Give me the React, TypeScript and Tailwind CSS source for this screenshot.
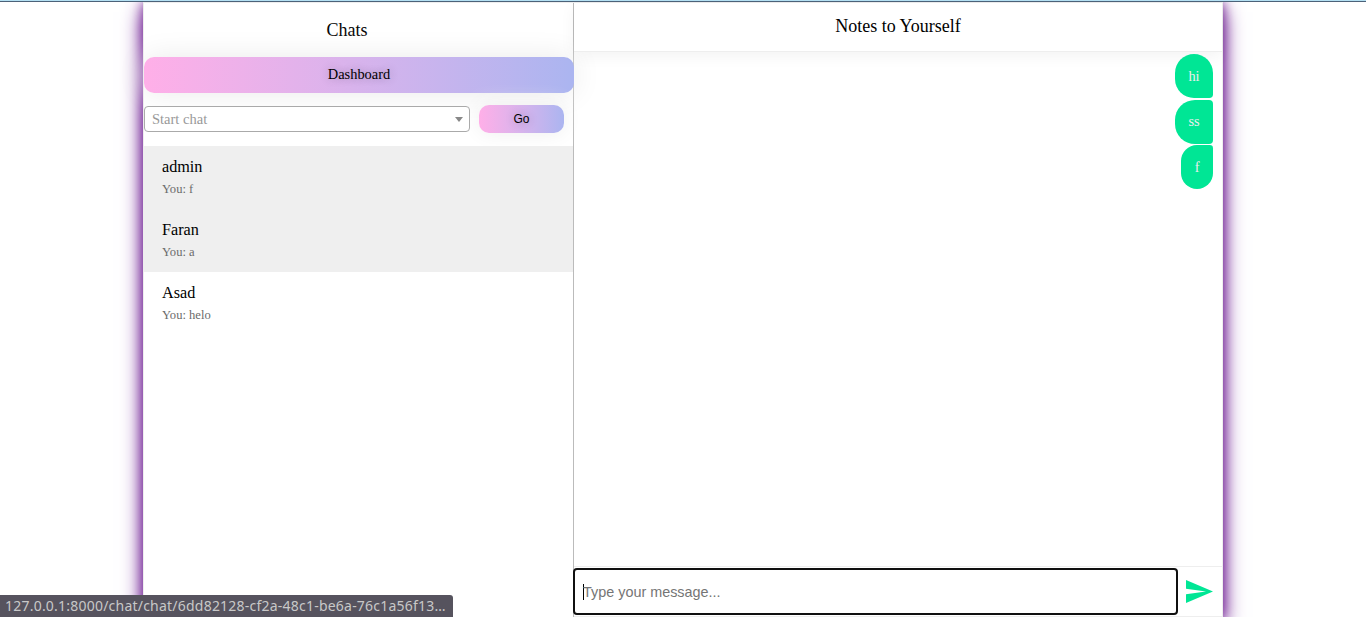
const chats = [
  { name: "admin", last: "You: f", unread: true },
  { name: "Faran", last: "You: a", unread: true },
  { name: "Asad", last: "You: helo", unread: false },
];

const messages = [
  { text: "hi", shape: "rounded-[20px] rounded-br-[4px]" },
  { text: "ss", shape: "rounded-[20px] rounded-r-[4px]" },
  { text: "f", shape: "rounded-[20px] rounded-tr-[4px]" },
];

function Sidebar() {
  return (
    <aside className="flex w-[430px] shrink-0 flex-col border-r border-[#bbbbbb]">
      <h2 className="h-[54px] pt-[14px] pr-[23px] text-center text-[18px] leading-[26px]">Chats</h2>
      <button className="h-9 w-[430px] shrink-0 rounded-[10px] bg-linear-to-r from-[#ffafe8] to-[#abb5f0] pb-[2px] text-[14.4px] leading-5 shadow-[0_0_30px_#eaeaea] [text-shadow:0_0_10px_#0000004d]">
        Dashboard
      </button>
      <div className="flex h-[53px] shrink-0 items-start pt-3">
        <div className="relative mt-px flex h-[26px] w-[326px] items-center justify-between rounded-[4px] border border-[#aaaaaa] bg-white pr-[6px] pl-[7px] text-[14.5px] text-[#999999]">
          <span className="pt-0.5">Start chat</span>
          <span className="border-x-[4px] border-t-[5px] border-x-transparent border-t-[#888888]" />
        </div>
        <button className="ml-[9px] h-7 w-[85px] rounded-[10px] bg-linear-to-r from-[#ffafe8] to-[#abb5f0] font-['Liberation_Sans',sans-serif] text-[12px] shadow-[0_0_20px_#eeeeee] [text-shadow:0_0_10px_#0000004d]">
          Go
        </button>
      </div>
      <ul className="relative">
        {chats.map((chat) => (
          <li key={chat.name} className={`h-[63px] pt-[10px] pl-[18px] ${chat.unread ? "bg-[#efefef]" : "bg-white"}`}>
            <div className="text-[16.2px] leading-[22px]">{chat.name}</div>
            <div className="text-[12.6px] leading-[22px] text-[#6b6b6b]">{chat.last}</div>
          </li>
        ))}
      </ul>
    </aside>
  );
}

function Conversation() {
  return (
    <section className="flex min-w-0 flex-1 flex-col">
      <h2 className="h-[49px] shrink-0 border-b border-[#eeeeee] bg-white pt-[10px] text-center text-[18px] leading-[26px] shadow-[0_4px_16px_#0000000d]">
        Notes to Yourself
      </h2>
      <div className="flex flex-1 flex-col items-end gap-[1.5px] pt-[2px] pr-[9px]">
        {messages.map((message) => (
          <div key={message.text} className={`h-11 bg-[#00e695] px-[13.4px] pt-[0.8px] text-[14.4px] leading-[43px] text-[#eeeeee] ${message.shape}`}>
            {message.text}
          </div>
        ))}
      </div>
      <div className="flex h-[51px] shrink-0 border-y border-[#eeeeee]">
        <div className="relative -ml-px mt-px flex h-[47px] w-[605px] items-center rounded-[4px] border-2 border-[#101010] bg-white pl-2 font-['Liberation_Sans',sans-serif] text-[14.4px] text-[#757575]">
          <span className="h-4 w-px bg-black" />
          <span className="-ml-px pt-0.5">Type your message...</span>
        </div>
        <svg className="mt-[13px] ml-2 h-[23px] w-[27px]" viewBox="0 0 27 23" fill="#00e695">
          <path d="M0 0 27 11.5 0 23V14.2L20 11.5 0 8.8Z" />
        </svg>
      </div>
    </section>
  );
}

export default function App() {
  return (
    <main className="relative flex h-[617px] flex-col overflow-hidden bg-white font-['Liberation_Serif',serif] text-black">
      <div className="relative z-10 h-[2px] shrink-0 border-b border-[#4c6279] bg-[#b4e0f3]" />
      <div className="mx-auto flex h-[615px] w-[1080px] border-x border-t border-[#eeeeee] bg-white shadow-[0_10px_20px_#6f1f93,0_0_12px_#7a2a9b]">
        <Sidebar />
        <Conversation />
      </div>
      <div className="absolute bottom-0 left-0 h-[22px] w-[453px] rounded-tr-[3px] bg-[#56535e] pl-[5px] font-['Noto_Sans',sans-serif] text-[14px] leading-[22px] tracking-[0.22px] whitespace-nowrap text-[#c8c8c8]">
        127.0.0.1:8000/chat/chat/6dd82128-cf2a-48c1-be6a-76c1a56f13…
      </div>
    </main>
  );
}
